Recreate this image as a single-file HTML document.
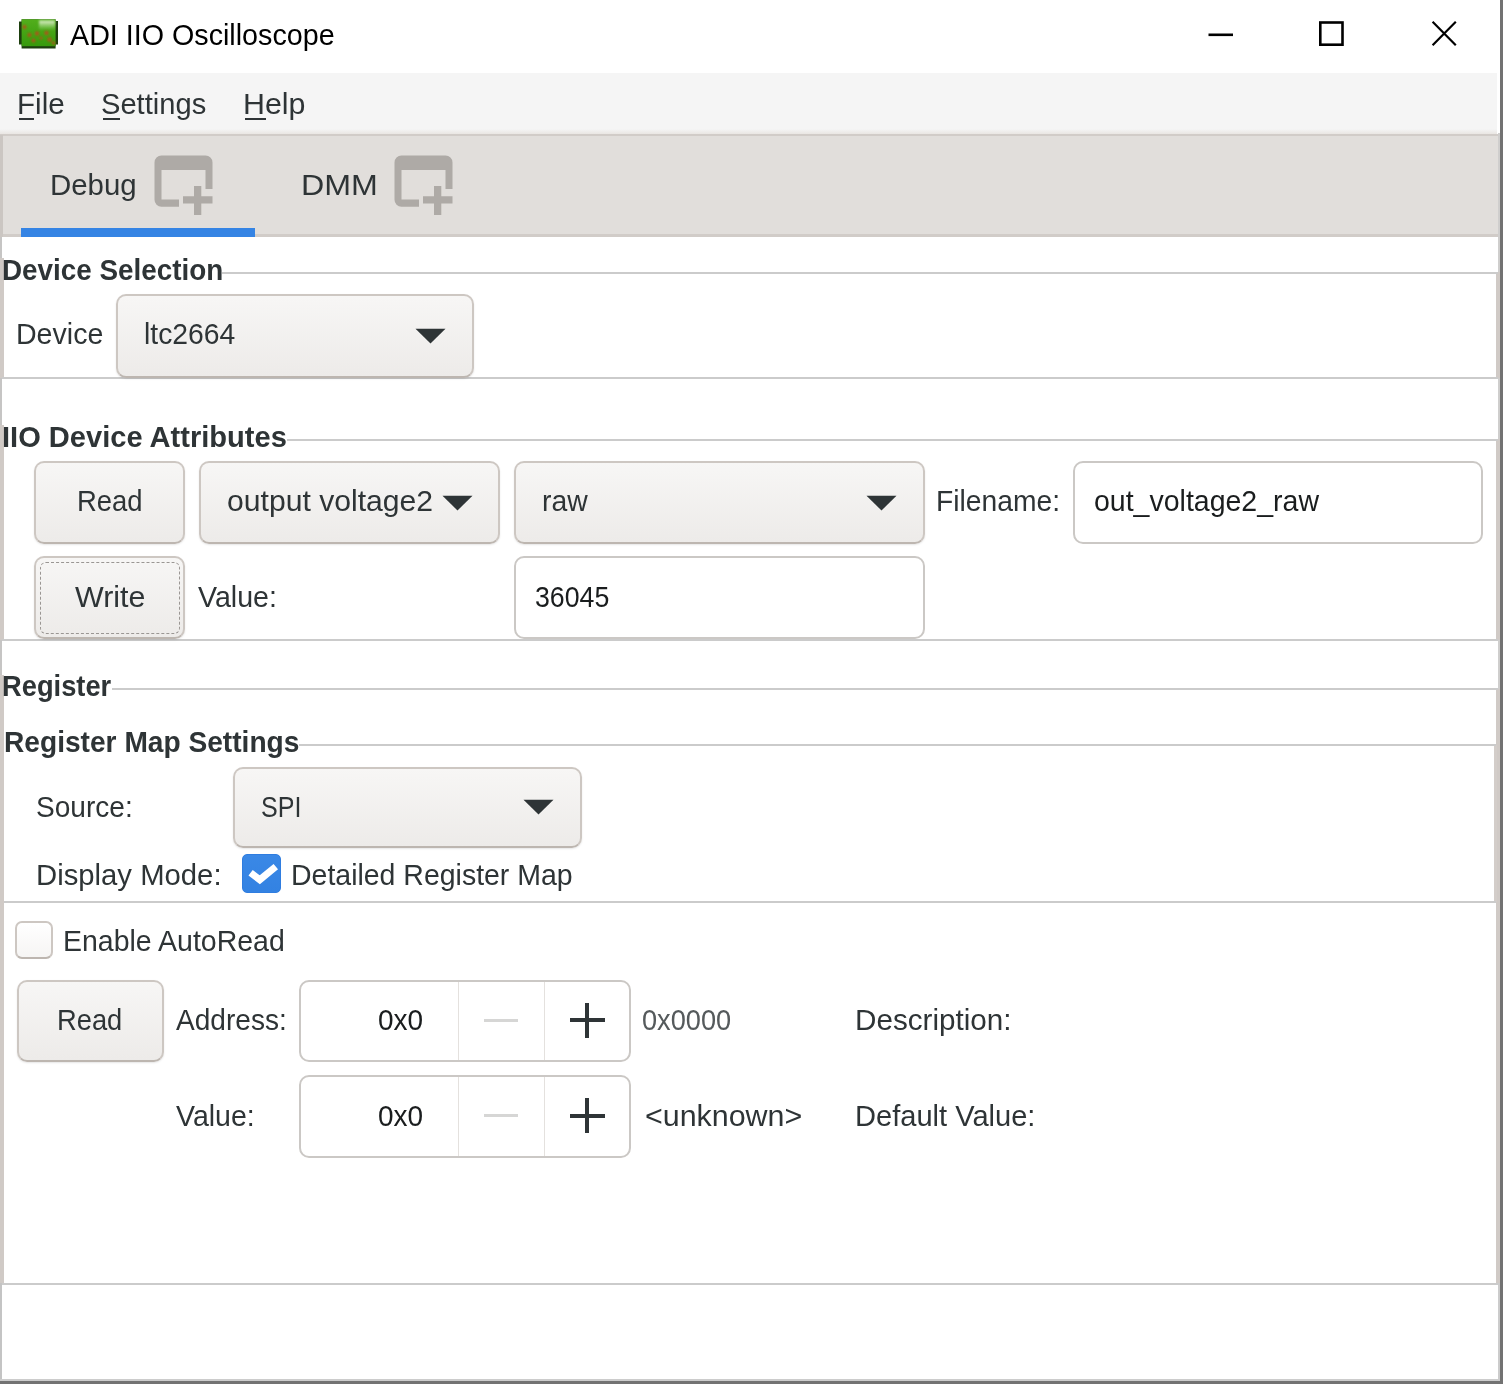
<!DOCTYPE html>
<html lang="en"><head><meta charset="utf-8"><title>ADI IIO Oscilloscope</title>
<style>
html,body{margin:0;padding:0;background:#fff;}
body{width:1504px;height:1385px;overflow:hidden;font-family:"Liberation Sans",sans-serif;}
#win{filter:blur(0.6px);position:relative;width:1504px;height:1385px;overflow:hidden;background:#fff;}
#win div,#win span,#win svg{position:absolute;box-sizing:border-box;}
.t{white-space:pre;line-height:1;transform-origin:0 0;font-family:"Liberation Sans",sans-serif;}
.menubar{left:0;top:73px;width:1497px;height:61px;background:linear-gradient(#f5f5f5 0,#f5f5f5 56px,#e9e6e3 61px);}
.tabbar{left:0;top:134px;width:1498px;height:103px;background:#e1dedb;border-top:2px solid #d1ccc8;border-bottom:3px solid #d1ccc8;}
.tabsel{left:21px;top:228px;width:234px;height:9px;background:#3584e4;}
.ul{height:2px;background:#2e3436;}
.hl{height:2px;background:#cbcbcb;}
.vl{width:2px;background:#cbcbcb;}
.btn{border:2px solid #cdc7c2;border-bottom-color:#bdb6b0;border-radius:10px;background:linear-gradient(#f7f6f5,#edebe9);box-shadow:0 1px 2px rgba(0,0,0,.10);}
.entry{border:2px solid #cbc8c5;border-radius:10px;background:#fff;}
.focus{border:1px dashed #9a9693;border-radius:6px;}
.cb{border:2px solid #cdc7c2;border-bottom-color:#bdb6b0;border-radius:7px;background:linear-gradient(#fff,#f6f5f4);}
.cbon{border:1px solid #2f7de0;border-radius:5px;background:linear-gradient(#3a88e6,#3382e2);}
.sep{width:1px;background:#e4e1de;}

</style></head>
<body>
<div id="win">
<!-- title bar -->
<svg style="left:19px;top:19px" width="39" height="30" viewBox="0 0 39 30">
  <defs><linearGradient id="gi" x1="0" y1="0" x2="0" y2="1"><stop offset="0" stop-color="#52ae1c"/><stop offset="1" stop-color="#369a0c"/></linearGradient>
  <linearGradient id="gh" x1="0" y1="0" x2="0" y2="1"><stop offset="0" stop-color="#f4fbe8" stop-opacity=".9"/><stop offset="1" stop-color="#b9e39a" stop-opacity="0"/></linearGradient>
  <filter id="bl" x="-20%" y="-20%" width="140%" height="140%"><feGaussianBlur stdDeviation="1.1"/></filter></defs>
  <path d="M2.6 0.3 H36.6 V2 H39 V25.5 H36.6 V29.5 H2.6 V25.5 H0 V2.5 H2.6 Z" fill="#1d3f0e"/>
  <rect x="2.6" y="0.3" width="34" height="26.9" fill="url(#gi)"/>
  <rect x="20" y="1.5" width="16" height="10" fill="url(#gh)" filter="url(#bl)"/>
  <g fill="#b0521a" opacity=".95" filter="url(#bl)"><circle cx="5.5" cy="8" r="2"/><circle cx="10.5" cy="16" r="2.1"/><circle cx="14.5" cy="21.5" r="2"/><circle cx="18" cy="14.5" r="2.2"/><circle cx="22" cy="19" r="1.6"/><circle cx="27.5" cy="14" r="2.2"/><circle cx="30.5" cy="20.5" r="2.2"/><circle cx="34.5" cy="24" r="1.8"/></g>
</svg>
<svg style="left:1200px;top:14px" width="270" height="40" viewBox="1200 14 270 40">
  <rect x="1208.5" y="33.5" width="24.5" height="2.6" fill="#000"/>
  <rect x="1320.3" y="22.5" width="22.2" height="22.2" fill="none" stroke="#000" stroke-width="2.6"/>
  <path d="M1432.6 21.8 L1455.8 45.2 M1455.8 21.8 L1432.6 45.2" stroke="#000" stroke-width="2.2" fill="none"/>
</svg>
<!-- menu bar -->
<div class="menubar"></div>
<div class="ul" style="left:19px;top:117.5px;width:15px"></div>
<div class="ul" style="left:103px;top:117.5px;width:17px"></div>
<div class="ul" style="left:245px;top:117.5px;width:21px"></div>
<!-- tab bar -->
<div class="tabbar"></div>
<div class="tabsel"></div>
<svg style="left:154px;top:155px" width="60" height="61" viewBox="0 0 60 61">
  <path fill="#aeaaa6" fill-rule="evenodd" d="M7.5 0.5 H51.5 a7 7 0 0 1 7 7 V34 H51.5 V15 H7.5 V44.5 H25 V51.8 H7.5 a7 7 0 0 1 -7 -7 V7.5 a7 7 0 0 1 7 -7 Z"/>
  <path fill="#aeaaa6" d="M40 31 H47.3 V41.3 H58.5 V48.6 H47.3 V60 H40 V48.6 H29 V41.3 H40 Z"/>
</svg>
<svg style="left:394px;top:155px" width="60" height="61" viewBox="0 0 60 61">
  <path fill="#aeaaa6" fill-rule="evenodd" d="M7.5 0.5 H51.5 a7 7 0 0 1 7 7 V34 H51.5 V15 H7.5 V44.5 H25 V51.8 H7.5 a7 7 0 0 1 -7 -7 V7.5 a7 7 0 0 1 7 -7 Z"/>
  <path fill="#aeaaa6" d="M40 31 H47.3 V41.3 H58.5 V48.6 H47.3 V60 H40 V48.6 H29 V41.3 H40 Z"/>
</svg>
<!-- notebook side strips -->
<div style="left:0;top:135px;width:3px;height:102px;background:#cbc6c2"></div>
<div style="left:0;top:237px;width:2px;height:1046px;background:#c6c5c4"></div>
<div style="left:0;top:258px;width:4px;height:120px;background:#d0cac6"></div>
<div style="left:0;top:425px;width:4px;height:215px;background:#d0cac6"></div>
<div style="left:0;top:675px;width:4px;height:609px;background:#d0cac6"></div>
<div style="left:1498px;top:133px;width:2px;height:1150px;background:#cfcecd"></div>
<div style="left:1496px;top:272px;width:4px;height:106px;background:#d0cac6"></div>
<div style="left:1496px;top:439px;width:4px;height:201px;background:#d0cac6"></div>
<div style="left:1496px;top:689px;width:4px;height:595px;background:#d0cac6"></div>
<div style="left:1494px;top:745px;width:3px;height:157px;background:#d3cdc9"></div>
<!-- Device Selection frame -->
<div class="hl" style="left:222px;top:271.5px;width:1276px"></div>
<div class="hl" style="left:2px;top:377px;width:1496px"></div>
<div class="btn" style="left:116px;top:294px;width:358px;height:84px"></div>
<svg style="left:414.5px;top:327.5px" width="31" height="16" viewBox="0 0 31 16"><path d="M0.5 0.8 H30.5 L15.5 15.5 Z" fill="#2e3436"/></svg>
<!-- IIO Device Attributes frame -->
<div class="hl" style="left:287px;top:438.5px;width:1211px"></div>
<div class="hl" style="left:2px;top:639px;width:1496px"></div>
<div class="btn" style="left:34px;top:460.5px;width:151px;height:83px"></div>
<div class="btn" style="left:198.5px;top:460.5px;width:301px;height:83px"></div>
<svg style="left:441.5px;top:494.5px" width="31" height="16" viewBox="0 0 31 16"><path d="M0.5 0.8 H30.5 L15.5 15.5 Z" fill="#2e3436"/></svg>
<div class="btn" style="left:514px;top:460.5px;width:411px;height:83px"></div>
<svg style="left:866px;top:494.5px" width="31" height="16" viewBox="0 0 31 16"><path d="M0.5 0.8 H30.5 L15.5 15.5 Z" fill="#2e3436"/></svg>
<div class="entry" style="left:1072.5px;top:460.5px;width:410.5px;height:83px"></div>
<div class="btn" style="left:34px;top:556px;width:151px;height:83px"></div>
<div class="focus" style="left:39.5px;top:561.5px;width:140px;height:72px"></div>
<div class="entry" style="left:514px;top:556px;width:411px;height:83px"></div>
<!-- Register frame -->
<div class="hl" style="left:112px;top:688px;width:1386px"></div>
<div class="hl" style="left:2px;top:1283px;width:1496px"></div>
<!-- Register Map Settings frame -->
<div class="hl" style="left:299px;top:744px;width:1197px"></div>
<div class="hl" style="left:4px;top:901px;width:1492px"></div>
<div class="btn" style="left:232.5px;top:766.5px;width:349px;height:81.5px"></div>
<svg style="left:523px;top:799px" width="31" height="16" viewBox="0 0 31 16"><path d="M0.5 0.8 H30.5 L15.5 15.5 Z" fill="#2e3436"/></svg>
<div class="cbon" style="left:242px;top:854px;width:39px;height:39px"></div>
<svg style="left:242px;top:854px" width="39" height="39" viewBox="0 0 39 39"><path d="M8.6 18.8 L17.8 25.8 L33.8 12.6" fill="none" stroke="#fff" stroke-width="7"/></svg>
<!-- bottom controls -->
<div class="cb" style="left:15px;top:921px;width:38px;height:38px"></div>
<div class="btn" style="left:16.5px;top:979.5px;width:147px;height:82.5px"></div>
<div class="entry" style="left:298.5px;top:979.5px;width:332.5px;height:82.5px"></div>
<div class="sep" style="left:457.5px;top:981.5px;height:78.5px"></div>
<div class="sep" style="left:544px;top:981.5px;height:78.5px"></div>
<div style="left:484px;top:1018.5px;width:34px;height:3px;background:#d6d6d5"></div>
<div style="left:569.5px;top:1018px;width:35px;height:4px;background:#2e3436"></div>
<div style="left:585px;top:1002.5px;width:4px;height:35px;background:#2e3436"></div>
<div class="entry" style="left:298.5px;top:1075px;width:332.5px;height:82.5px"></div>
<div class="sep" style="left:457.5px;top:1077px;height:78.5px"></div>
<div class="sep" style="left:544px;top:1077px;height:78.5px"></div>
<div style="left:484px;top:1114px;width:34px;height:3px;background:#d6d6d5"></div>
<div style="left:569.5px;top:1113.5px;width:35px;height:4px;background:#2e3436"></div>
<div style="left:585px;top:1098px;width:4px;height:35px;background:#2e3436"></div>
<!-- window borders -->
<div style="left:0;top:1283px;width:2px;height:98px;background:#c4c4c4"></div>
<div style="left:0;top:1379px;width:1500px;height:2px;background:#cccccc"></div>
<div style="left:1498px;top:1283px;width:2px;height:98px;background:#cccccc"></div>
<div style="left:0;top:1381px;width:1503px;height:3px;background:#727272"></div>
<div style="left:1500px;top:0;width:3px;height:1384px;background:#727272"></div>

<span class="t" style="left:69.9px;top:20.2px;font-size:30px;transform:scaleX(0.9561);color:#000;">ADI IIO Oscilloscope</span>
<span class="t" style="left:16.7px;top:88.8px;font-size:30px;transform:scaleX(0.9859);color:#2e3436;">File</span>
<span class="t" style="left:101.4px;top:88.8px;font-size:30px;transform:scaleX(0.9706);color:#2e3436;">Settings</span>
<span class="t" style="left:242.8px;top:88.8px;font-size:30px;transform:scaleX(1.0123);color:#2e3436;">Help</span>
<span class="t" style="left:50.2px;top:169.9px;font-size:30px;transform:scaleX(0.9804);color:#2e3436;">Debug</span>
<span class="t" style="left:301.3px;top:169.9px;font-size:30px;transform:scaleX(1.0720);color:#2e3436;">DMM</span>
<span class="t" style="left:2.2px;top:255.1px;font-size:30px;transform:scaleX(0.9282);color:#2e3436;font-weight:700;">Device Selection</span>
<span class="t" style="left:16.4px;top:319.3px;font-size:30px;transform:scaleX(0.9519);color:#2e3436;">Device</span>
<span class="t" style="left:143.8px;top:319.3px;font-size:30px;transform:scaleX(0.9433);color:#2e3436;">ltc2664</span>
<span class="t" style="left:2.4px;top:421.8px;font-size:30px;transform:scaleX(0.9690);color:#2e3436;font-weight:700;">IIO Device Attributes</span>
<span class="t" style="left:76.5px;top:486.3px;font-size:30px;transform:scaleX(0.9148);color:#2e3436;">Read</span>
<span class="t" style="left:227.3px;top:486.3px;font-size:30px;transform:scaleX(1.0046);color:#2e3436;">output voltage2</span>
<span class="t" style="left:542.2px;top:486.3px;font-size:30px;transform:scaleX(0.9455);color:#2e3436;">raw</span>
<span class="t" style="left:936.2px;top:486.3px;font-size:30px;transform:scaleX(0.9412);color:#2e3436;">Filename:</span>
<span class="t" style="left:1094.2px;top:486.3px;font-size:30px;transform:scaleX(0.9500);color:#1a1d1e;">out_voltage2_raw</span>
<span class="t" style="left:75.4px;top:581.8px;font-size:30px;transform:scaleX(1.0136);color:#2e3436;">Write</span>
<span class="t" style="left:198.1px;top:581.8px;font-size:30px;transform:scaleX(0.9529);color:#2e3436;">Value:</span>
<span class="t" style="left:534.7px;top:581.8px;font-size:30px;transform:scaleX(0.8904);color:#1a1d1e;">36045</span>
<span class="t" style="left:2.3px;top:671.3px;font-size:30px;transform:scaleX(0.9096);color:#2e3436;font-weight:700;">Register</span>
<span class="t" style="left:4.2px;top:727.1px;font-size:30px;transform:scaleX(0.9377);color:#2e3436;font-weight:700;">Register Map Settings</span>
<span class="t" style="left:36.1px;top:791.5px;font-size:30px;transform:scaleX(0.9354);color:#2e3436;">Source:</span>
<span class="t" style="left:260.9px;top:791.5px;font-size:30px;transform:scaleX(0.8346);color:#2e3436;">SPI</span>
<span class="t" style="left:35.6px;top:860.3px;font-size:30px;transform:scaleX(0.9760);color:#2e3436;">Display Mode:</span>
<span class="t" style="left:290.8px;top:860.3px;font-size:30px;transform:scaleX(0.9489);color:#2e3436;">Detailed Register Map</span>
<span class="t" style="left:62.6px;top:926.1px;font-size:30px;transform:scaleX(0.9496);color:#2e3436;">Enable AutoRead</span>
<span class="t" style="left:56.9px;top:1005.1px;font-size:30px;transform:scaleX(0.9103);color:#2e3436;">Read</span>
<span class="t" style="left:176.1px;top:1005.1px;font-size:30px;transform:scaleX(0.9357);color:#2e3436;">Address:</span>
<span class="t" style="left:378.4px;top:1005.1px;font-size:30px;transform:scaleX(0.9325);color:#1a1d1e;">0x0</span>
<span class="t" style="left:642.2px;top:1005.1px;font-size:30px;transform:scaleX(0.9062);color:#555a5c;">0x0000</span>
<span class="t" style="left:855.2px;top:1005.1px;font-size:30px;transform:scaleX(0.9878);color:#2e3436;">Description:</span>
<span class="t" style="left:176.0px;top:1100.6px;font-size:30px;transform:scaleX(0.9504);color:#2e3436;">Value:</span>
<span class="t" style="left:378.4px;top:1100.6px;font-size:30px;transform:scaleX(0.9325);color:#1a1d1e;">0x0</span>
<span class="t" style="left:644.5px;top:1100.6px;font-size:30px;transform:scaleX(1.0136);color:#2e3436;">&lt;unknown&gt;</span>
<span class="t" style="left:855.3px;top:1100.6px;font-size:30px;transform:scaleX(0.9687);color:#2e3436;">Default Value:</span>
</div>
</body></html>
